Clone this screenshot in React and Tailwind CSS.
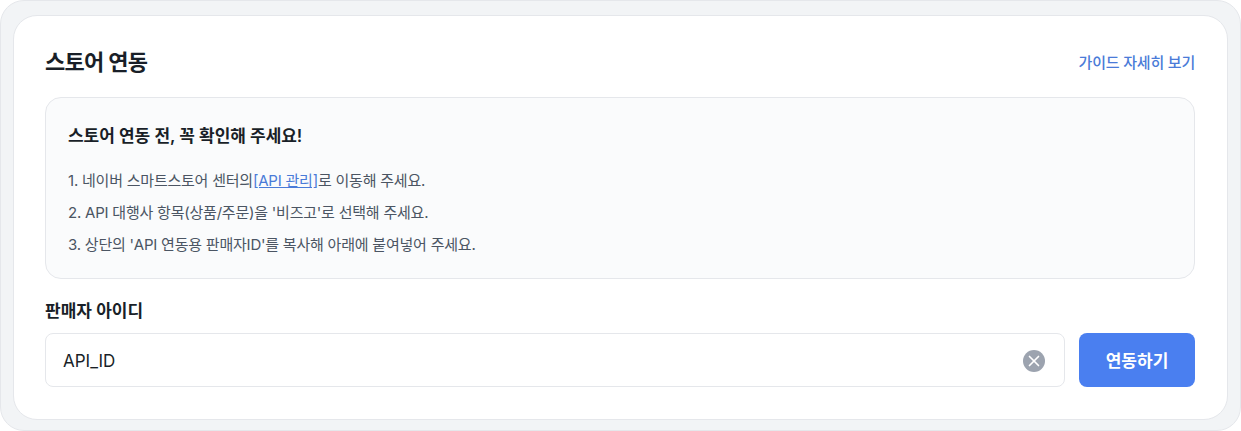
import { X } from 'lucide-react'

const FONT = "font-['Inter','Noto_Sans_CJK_KR',sans-serif]"

export default function App() {
  return (
    <div className={`h-[431px] w-[1241px] overflow-hidden bg-white ${FONT}`}>
      <div className="h-[431px] rounded-[24px] border border-[#e5e7eb] bg-[#f2f4f6] px-3 pt-3.5 pb-[11px]">
        <div className="h-[405px] rounded-[24px] border border-[#e5e7eb] bg-white pt-[30px] pr-8 pl-[31px]">
          <div className="flex h-8 items-center justify-between">
            <h2 className="text-[22px] font-bold tracking-[-0.7px] text-[#191f28]">스토어 연동</h2>
            <a className="pt-0.5 text-[15px] font-medium tracking-[-0.2px] text-[#4a7bd8]">가이드 자세히 보기</a>
          </div>

          <div className="mt-[19px] h-[182px] rounded-2xl border border-[#e5e7eb] bg-[#fafbfc] px-[22px] pt-[26px]">
            <p className="text-[17px] leading-6 font-semibold tracking-[-0.05px] text-[#191f28]">스토어 연동 전, 꼭 확인해 주세요!</p>
            <ol className="mt-[22px] flex flex-col gap-[11px] text-[15px] leading-[21px] tracking-[-0.22px] text-[#4b5563]">
              <li>1. 네이버 스마트스토어 센터의<a className="text-[#4a7bd8] underline">[API 관리]</a>로 이동해 주세요.</li>
              <li>2. API 대행사 항목(상품/주문)을 '비즈고'로 선택해 주세요.</li>
              <li>3. 상단의 'API 연동용 판매자ID'를 복사해 아래에 붙여넣어 주세요.</li>
            </ol>
          </div>

          <label className="mt-[19px] block text-[17px] leading-[26px] font-semibold text-[#191f28]">판매자 아이디</label>
          <div className="mt-[9px] flex gap-3.5">
            <div className="flex h-[54px] flex-1 items-center justify-between rounded-lg border border-[#e5e7eb] bg-white pr-[19px] pl-[17px]">
              <span className="pt-1 text-[17px] text-[#191f28]">API_ID</span>
              <span className="mt-0.5 flex size-[22px] items-center justify-center rounded-full bg-[#9ca3af] text-white">
                <X size={18} strokeWidth={2.2} />
              </span>
            </div>
            <button className="h-[54px] w-[116px] rounded-lg bg-[#4a7ff0] pt-1 text-[17px] font-semibold text-white">연동하기</button>
          </div>
        </div>
      </div>
    </div>
  )
}
